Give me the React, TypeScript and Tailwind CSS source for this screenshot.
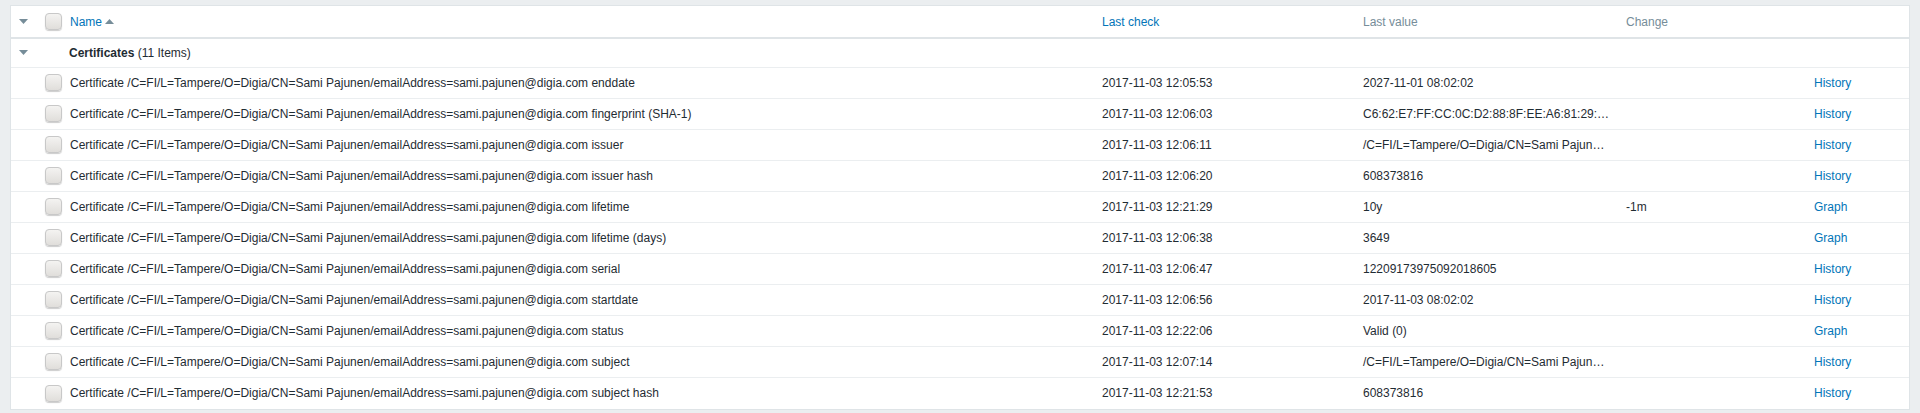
import React from 'react';

const rows = [
  { key: 'enddate', check: '2017-11-03 12:05:53', value: '2027-11-01 08:02:02', change: '', link: 'History' },
  { key: 'fingerprint (SHA-1)', check: '2017-11-03 12:06:03', value: 'C6:62:E7:FF:CC:0C:D2:88:8F:EE:A6:81:29:…', change: '', link: 'History' },
  { key: 'issuer', check: '2017-11-03 12:06:11', value: '/C=FI/L=Tampere/O=Digia/CN=Sami Pajun…', change: '', link: 'History' },
  { key: 'issuer hash', check: '2017-11-03 12:06:20', value: '608373816', change: '', link: 'History' },
  { key: 'lifetime', check: '2017-11-03 12:21:29', value: '10y', change: '-1m', link: 'Graph' },
  { key: 'lifetime (days)', check: '2017-11-03 12:06:38', value: '3649', change: '', link: 'Graph' },
  { key: 'serial', check: '2017-11-03 12:06:47', value: '12209173975092018605', change: '', link: 'History' },
  { key: 'startdate', check: '2017-11-03 12:06:56', value: '2017-11-03 08:02:02', change: '', link: 'History' },
  { key: 'status', check: '2017-11-03 12:22:06', value: 'Valid (0)', change: '', link: 'Graph' },
  { key: 'subject', check: '2017-11-03 12:07:14', value: '/C=FI/L=Tampere/O=Digia/CN=Sami Pajun…', change: '', link: 'History' },
  { key: 'subject hash', check: '2017-11-03 12:21:53', value: '608373816', change: '', link: 'History' },
];

const prefix = 'Certificate /C=FI/L=Tampere/O=Digia/CN=Sami Pajunen/emailAddress=sami.pajunen@digia.com';

function Checkbox() {
  return (
    <span className="block w-[17px] h-[17px] rounded-[4px] border border-[#c8c8c8] bg-gradient-to-b from-[#f4f3f1] to-[#e0dedb] shadow-[0_1px_1px_rgba(0,0,0,0.2)]" />
  );
}

function DownArrow() {
  return (
    <svg width="9" height="5" viewBox="0 0 9 5" className="block">
      <path d="M0 0 L9 0 L4.5 5 Z" fill="#768d99" />
    </svg>
  );
}

export default function App() {
  return (
    <div className="min-h-[413px] bg-[#ebeef0] pt-[5px] pl-[10px] pr-[10px] font-['Liberation_Sans',Arial,sans-serif] text-[12px] text-[#1f2c33]">
      <div className="bg-white border border-[#dfe4e7] w-[1900px]">
        <table className="w-full table-fixed border-collapse">
          <colgroup>
            <col className="w-[29px]" />
            <col className="w-[25px]" />
            <col className="w-[1032px]" />
            <col className="w-[261px]" />
            <col className="w-[263px]" />
            <col className="w-[188px]" />
            <col />
          </colgroup>
          <thead>
            <tr className="h-[32px] border-b-2 border-[#dfe4e7]">
              <th className="pl-[8px] text-left font-normal">
                <DownArrow />
              </th>
              <th className="pl-[5px] text-left font-normal">
                <Checkbox />
              </th>
              <th className="pl-[5px] text-left font-normal">
                <span className="text-[#0275b8]">Name</span>
                <svg width="9" height="5" viewBox="0 0 9 5" className="inline-block ml-[3px] mb-[2px]">
                  <path d="M0 5 L9 5 L4.5 0 Z" fill="#768d99" />
                </svg>
              </th>
              <th className="pl-[5px] text-left font-normal text-[#0275b8]">Last check</th>
              <th className="pl-[5px] text-left font-normal text-[#768d99]">Last value</th>
              <th className="pl-[5px] text-left font-normal text-[#768d99]">Change</th>
              <th />
            </tr>
          </thead>
          <tbody>
            <tr className="h-[29px] border-b border-[#ebeef0]">
              <td className="pl-[8px]">
                <DownArrow />
              </td>
              <td />
              <td className="pl-[4px]" colSpan={5}>
                <span className="font-bold">Certificates</span> (11 Items)
              </td>
            </tr>
            {rows.map((r, i) => (
              <tr
                key={r.key}
                className={i === rows.length - 1 ? 'h-[32px]' : 'h-[31px] border-b border-[#ebeef0]'}
              >
                <td />
                <td className="pl-[5px]">
                  <Checkbox />
                </td>
                <td className="pl-[5px] whitespace-nowrap">
                  {prefix} {r.key}
                </td>
                <td className="pl-[5px] whitespace-nowrap">{r.check}</td>
                <td className="pl-[5px] whitespace-nowrap">{r.value}</td>
                <td className="pl-[5px] whitespace-nowrap">{r.change}</td>
                <td className="pl-[5px] text-[#0275b8]">{r.link}</td>
              </tr>
            ))}
          </tbody>
        </table>
      </div>
    </div>
  );
}
